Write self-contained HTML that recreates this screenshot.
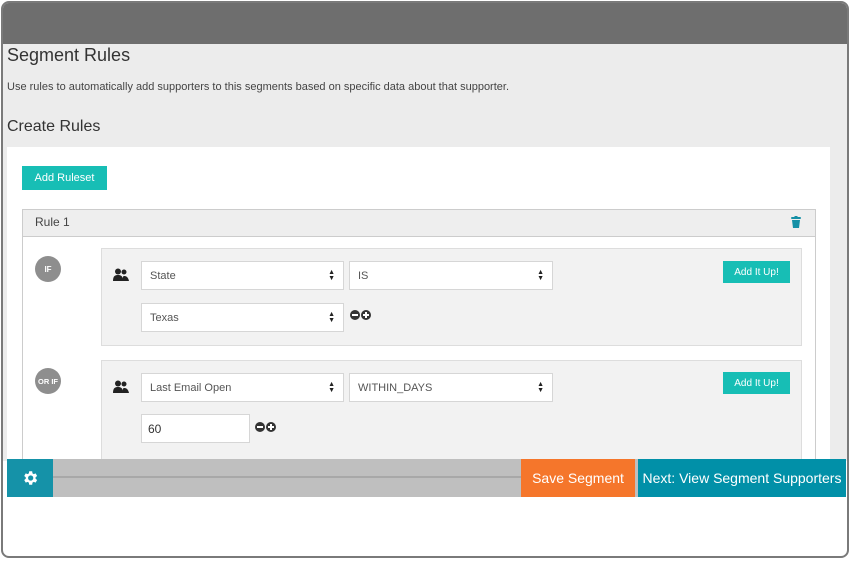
<!DOCTYPE html>
<html><head><style>
*{box-sizing:border-box;margin:0;padding:0}
body{width:853px;height:570px;background:#fff;font-family:"Liberation Sans",sans-serif;position:relative;overflow:hidden}
.a{position:absolute}
.frame{left:1px;top:1px;width:848px;height:557px;border:2px solid #7a7a7a;border-radius:8px;overflow:hidden;background:#fff}
.sel{position:absolute;background:#fff;border:1px solid #d6d6d6;font-size:11px;color:#555;padding-left:8px;display:flex;align-items:center}
.arr{position:absolute;right:8px;top:50%;transform:translateY(-50%);font-size:7px;line-height:6px;color:#222}
.btn{position:absolute;background:#17beb5;color:#fff;font-size:11px;display:flex;align-items:center;justify-content:center}
.circ{position:absolute;width:26px;height:26px;border-radius:50%;background:#8e8e8e;color:#fff;font-size:8px;font-weight:bold;display:flex;align-items:center;justify-content:center}
.panel{position:absolute;left:101px;width:701px;background:#f2f2f2;border:1px solid #ddd}
.pm{position:absolute;font-size:0}
.pm span{display:inline-block;width:10px;height:10px;border-radius:50%;background:#333;position:relative;margin-right:1px}
.pm span:after{content:"";position:absolute;left:2px;top:4px;width:6px;height:2px;background:#fff}
.pm span.p:before{content:"";position:absolute;left:4px;top:2px;width:2px;height:6px;background:#fff}
</style></head><body>
<div class="a frame">
 <div class="a" style="left:0;top:0;width:846px;height:41px;background:#6e6e6e"></div>
 <div class="a" style="left:0;top:41px;width:846px;height:417px;background:#ececec"></div>
</div>
<div class="a" style="left:7px;top:45px;font-size:18px;color:#333">Segment Rules</div>
<div class="a" style="left:7px;top:81px;font-size:11px;color:#444">Use rules to automatically add supporters to this segments based on specific data about that supporter.</div>
<div class="a" style="left:7px;top:118px;font-size:16px;color:#333">Create Rules</div>
<div class="a" style="left:7px;top:147px;width:823px;height:312px;background:#fff"></div>
<div class="btn" style="left:22px;top:166px;width:85px;height:24px;font-size:11px">Add Ruleset</div>
<div class="a" style="left:22px;top:209px;width:794px;height:250px;border:1px solid #ccc;border-bottom:none"></div>
<div class="a" style="left:23px;top:210px;width:792px;height:27px;background:#eee;border-bottom:1px solid #ccc"></div>
<div class="a" style="left:35px;top:215px;font-size:12px;color:#444">Rule 1</div>
<svg class="a" style="left:791px;top:216px" width="10" height="12" viewBox="0 0 10 12"><rect x="0" y="1" width="10" height="2" rx="1" fill="#1590a6"/><rect x="3.5" y="0" width="3" height="2" fill="#1590a6"/><path d="M1 4h8l-1 8H2z" fill="#1590a6"/></svg>

<div class="circ" style="left:35px;top:256px">IF</div>
<div class="circ" style="left:35px;top:368px;font-size:7.5px">OR IF</div>

<div class="panel" style="top:248px;height:98px"></div>
<div class="panel" style="top:360px;height:100px"></div>

<svg class="a" style="left:113px;top:268px" width="16" height="13" viewBox="0 0 16 13"><circle cx="5" cy="3.5" r="3" fill="#222"/><path d="M0 13c0-5 2-6 5-6s5 1 5 6z" fill="#222"/><circle cx="11" cy="4" r="2.5" fill="#222"/><path d="M9 13c1-4 1-5 2-5s4 0 5 5z" fill="#222"/></svg>
<svg class="a" style="left:113px;top:380px" width="16" height="13" viewBox="0 0 16 13"><circle cx="5" cy="3.5" r="3" fill="#222"/><path d="M0 13c0-5 2-6 5-6s5 1 5 6z" fill="#222"/><circle cx="11" cy="4" r="2.5" fill="#222"/><path d="M9 13c1-4 1-5 2-5s4 0 5 5z" fill="#222"/></svg>

<div class="sel" style="left:141px;top:261px;width:203px;height:29px">State<div class="arr">▲<br>▼</div></div>
<div class="sel" style="left:349px;top:261px;width:204px;height:29px">IS<div class="arr">▲<br>▼</div></div>
<div class="sel" style="left:141px;top:303px;width:203px;height:29px">Texas<div class="arr">▲<br>▼</div></div>
<div class="pm" style="left:350px;top:310px"><span></span><span class="p"></span></div>
<div class="btn" style="left:723px;top:261px;width:67px;height:22px;font-size:10px">Add It Up!</div>

<div class="sel" style="left:141px;top:373px;width:203px;height:29px">Last Email Open<div class="arr">▲<br>▼</div></div>
<div class="sel" style="left:349px;top:373px;width:204px;height:29px">WITHIN_DAYS<div class="arr">▲<br>▼</div></div>
<div class="sel" style="left:141px;top:414px;width:109px;height:29px;font-size:12px;color:#333;padding-left:6px">60</div>
<div class="pm" style="left:255px;top:422px"><span></span><span class="p"></span></div>
<div class="btn" style="left:723px;top:372px;width:67px;height:22px;font-size:10px">Add It Up!</div>

<div class="a" style="left:7px;top:459px;width:839px;height:38px;background:#bfbfbf"></div>
<div class="a" style="left:53px;top:476px;width:468px;height:2px;background:#a8a8a8"></div>
<div class="a" style="left:7px;top:459px;width:46px;height:38px;background:#1592a8"></div>
<svg class="a" style="left:21px;top:469px" width="18" height="18" viewBox="0 0 24 24"><path fill="#fff" d="M19.4 13a7.5 7.5 0 0 0 0-2l2.1-1.6-2-3.5-2.5 1a7 7 0 0 0-1.7-1L14.9 3h-4l-.4 2.9a7 7 0 0 0-1.7 1l-2.5-1-2 3.5L6.4 11a7.5 7.5 0 0 0 0 2l-2.1 1.6 2 3.5 2.5-1a7 7 0 0 0 1.7 1l.4 2.9h4l.4-2.9a7 7 0 0 0 1.7-1l2.5 1 2-3.5zM12.9 15.5a3.5 3.5 0 1 1 0-7 3.5 3.5 0 0 1 0 7z"/></svg>
<div class="a" style="left:521px;top:459px;width:114px;height:38px;background:#f5762b;color:#fff;font-size:14px;display:flex;align-items:center;justify-content:center">Save Segment</div>
<div class="a" style="left:638px;top:459px;width:208px;height:38px;background:#0190a8;color:#fff;font-size:14px;display:flex;align-items:center;justify-content:center;white-space:nowrap">Next: View Segment Supporters</div>
</body></html>
